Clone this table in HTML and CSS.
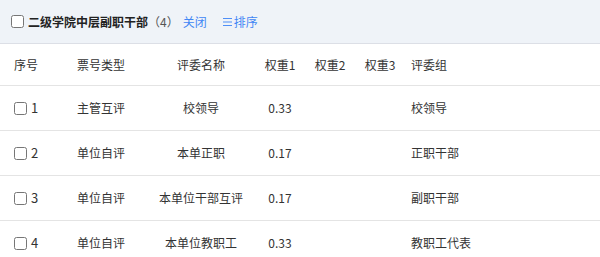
FILE: index.html
```html
<!DOCTYPE html>
<html lang="zh-CN">
<head>
<meta charset="utf-8">
<link rel="stylesheet" href="styles.css">
</head>
<body>
<div class="panel">
  <div class="bar">
    <input type="checkbox" class="cb head-cb">
    <span class="title">二级学院中层副职干部</span>
    <span class="count">（4）</span>
    <a class="link close">关闭</a>
    <a class="link sort"><svg class="sort-ico" width="9" height="10" viewBox="0 0 9 10"><path d="M0 1.5h9M0 5h9M0 8.5h9" stroke="#4f8ff7" stroke-width="1" fill="none"/></svg>排序</a>
  </div>
  <table class="grid">
    <colgroup>
      <col class="c1"><col class="c2"><col class="c3"><col class="c4"><col class="c5"><col class="c6"><col class="c7">
    </colgroup>
    <thead>
      <tr><th class="l">序号</th><th class="l">票号类型</th><th>评委名称</th><th>权重1</th><th>权重2</th><th>权重3</th><th class="l g">评委组</th></tr>
    </thead>
    <tbody>
      <tr><td class="l"><label class="num"><input type="checkbox" class="cb">1</label></td><td class="l">主管互评</td><td>校领导</td><td>0.33</td><td></td><td></td><td class="l g">校领导</td></tr>
      <tr><td class="l"><label class="num"><input type="checkbox" class="cb">2</label></td><td class="l">单位自评</td><td>本单正职</td><td>0.17</td><td></td><td></td><td class="l g">正职干部</td></tr>
      <tr><td class="l"><label class="num"><input type="checkbox" class="cb">3</label></td><td class="l">单位自评</td><td>本单位干部互评</td><td>0.17</td><td></td><td></td><td class="l g">副职干部</td></tr>
      <tr><td class="l"><label class="num"><input type="checkbox" class="cb">4</label></td><td class="l">单位自评</td><td>本单位教职工</td><td>0.33</td><td></td><td></td><td class="l g">教职工代表</td></tr>
    </tbody>
  </table>
</div>
</body>
</html>
```
FILE: styles.css
```css
* { box-sizing: border-box; }
html, body { margin: 0; padding: 0; background: #fff; }
body {
  font-family: "Noto Sans CJK SC", "Noto Sans", sans-serif;
  font-size: 12px;
  color: #333;
  width: 600px;
  overflow: hidden;
}
.bar {
  height: 44px;
  background: #eff3f8;
  border-bottom: 1px solid #dcdfe6;
  display: flex;
  align-items: center;
  padding-left: 11px;
}
.cb {
  width: 13px;
  height: 13px;
  margin: 0 4px 0 0;
}
.title { font-weight: 700; color: #222; }
.count { color: #555; }
.link { color: #3f86f5; cursor: pointer; }
.close { margin-left: 4px; }
.sort { margin-left: 16px; display: inline-flex; align-items: center; }
.sort-ico { margin-right: 2px; }
.grid {
  width: 600px;
  border-collapse: collapse;
  table-layout: fixed;
}
.c1 { width: 63px; }
.c2 { width: 84px; }
.c3 { width: 108px; }
.c4 { width: 50px; }
.c5 { width: 50px; }
.c6 { width: 50px; }
.c7 { width: 195px; }
th, td {
  font-weight: 400;
  text-align: center;
  padding: 0;
  white-space: nowrap;
  border-bottom: 1px solid #e4e4e4;
}
th { height: 41px; }
td { height: 45px; }
th.l, td.l { text-align: left; padding-left: 14px; }
th.g, td.g { padding-left: 6px; }
.num { font-size: 13px; }
.num .cb { margin: 0 4px 0 0; vertical-align: -2px; }
```
